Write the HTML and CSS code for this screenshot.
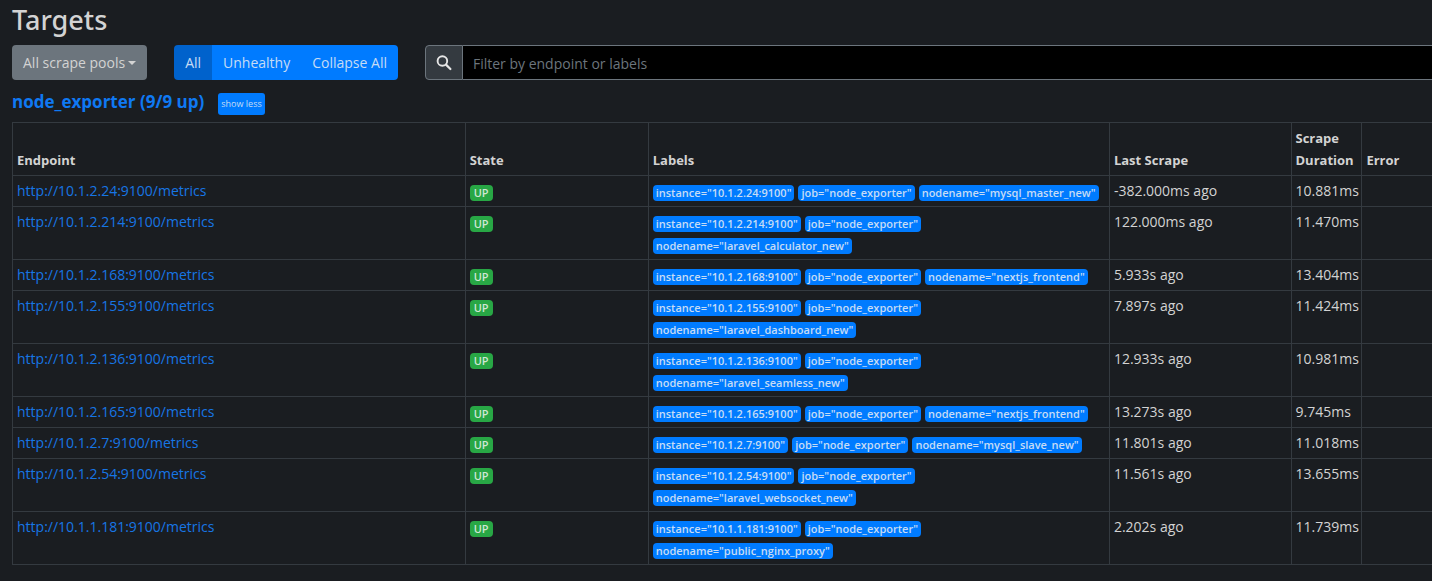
FILE: index.html
```html
<!DOCTYPE html>
<html lang="en">
<head>
<meta charset="utf-8">
<title>Targets</title>
<link rel="stylesheet" href="styles.css">
</head>
<body>
<main class="page">
  <h2 class="title">Targets</h2>
  <div class="toolbar">
    <button type="button" class="btn btn-pools">All scrape pools<span class="caret"></span></button>
    <div class="btn-group" role="group" aria-label="Target filter">
      <button type="button" class="btn active">All</button>
      <button type="button" class="btn">Unhealthy</button>
      <button type="button" class="btn">Collapse All</button>
    </div>
    <div class="search">
      <label class="search-icon" for="filter" aria-label="Filter targets">
        <svg viewBox="0 0 16 16" width="16" height="16" fill="none" stroke="currentColor"><circle cx="6.4" cy="6" r="4.8" stroke-width="1.9"/><path d="M10 9.6l4.4 4.4" stroke-width="2.2" stroke-linecap="round"/></svg>
      </label>
      <input id="filter" class="search-input" type="text" placeholder="Filter by endpoint or labels">
    </div>
  </div>
  <section class="pool">
    <h3 class="pool-head"><a class="pool-link" href="#pool">node_exporter (9/9 up)</a><button type="button" class="btn btn-xs">show less</button></h3>
    <table class="targets" id="pool">
      <colgroup><col class="c-endpoint"><col class="c-state"><col class="c-labels"><col class="c-last"><col class="c-duration"><col class="c-error"></colgroup>
      <thead>
        <tr><th>Endpoint</th><th>State</th><th>Labels</th><th>Last Scrape</th><th>Scrape Duration</th><th>Error</th></tr>
      </thead>
      <tbody>
        <tr><td><a href="http://10.1.2.24:9100/metrics">http://10.1.2.24:9100/metrics</a></td><td><span class="badge up">UP</span></td><td><div class="labels"><span class="badge">instance="10.1.2.24:9100"</span><span class="badge">job="node_exporter"</span><span class="badge">nodename="mysql_master_new"</span></div></td><td>-382.000ms ago</td><td>10.881ms</td><td></td></tr>
        <tr><td><a href="http://10.1.2.214:9100/metrics">http://10.1.2.214:9100/metrics</a></td><td><span class="badge up">UP</span></td><td><div class="labels"><span class="badge">instance="10.1.2.214:9100"</span><span class="badge">job="node_exporter"</span><span class="badge">nodename="laravel_calculator_new"</span></div></td><td>122.000ms ago</td><td>11.470ms</td><td></td></tr>
        <tr><td><a href="http://10.1.2.168:9100/metrics">http://10.1.2.168:9100/metrics</a></td><td><span class="badge up">UP</span></td><td><div class="labels"><span class="badge">instance="10.1.2.168:9100"</span><span class="badge">job="node_exporter"</span><span class="badge">nodename="nextjs_frontend"</span></div></td><td>5.933s ago</td><td>13.404ms</td><td></td></tr>
        <tr><td><a href="http://10.1.2.155:9100/metrics">http://10.1.2.155:9100/metrics</a></td><td><span class="badge up">UP</span></td><td><div class="labels"><span class="badge">instance="10.1.2.155:9100"</span><span class="badge">job="node_exporter"</span><span class="badge">nodename="laravel_dashboard_new"</span></div></td><td>7.897s ago</td><td>11.424ms</td><td></td></tr>
        <tr><td><a href="http://10.1.2.136:9100/metrics">http://10.1.2.136:9100/metrics</a></td><td><span class="badge up">UP</span></td><td><div class="labels"><span class="badge">instance="10.1.2.136:9100"</span><span class="badge">job="node_exporter"</span><span class="badge">nodename="laravel_seamless_new"</span></div></td><td>12.933s ago</td><td>10.981ms</td><td></td></tr>
        <tr><td><a href="http://10.1.2.165:9100/metrics">http://10.1.2.165:9100/metrics</a></td><td><span class="badge up">UP</span></td><td><div class="labels"><span class="badge">instance="10.1.2.165:9100"</span><span class="badge">job="node_exporter"</span><span class="badge">nodename="nextjs_frontend"</span></div></td><td>13.273s ago</td><td>9.745ms</td><td></td></tr>
        <tr><td><a href="http://10.1.2.7:9100/metrics">http://10.1.2.7:9100/metrics</a></td><td><span class="badge up">UP</span></td><td><div class="labels"><span class="badge">instance="10.1.2.7:9100"</span><span class="badge">job="node_exporter"</span><span class="badge">nodename="mysql_slave_new"</span></div></td><td>11.801s ago</td><td>11.018ms</td><td></td></tr>
        <tr><td><a href="http://10.1.2.54:9100/metrics">http://10.1.2.54:9100/metrics</a></td><td><span class="badge up">UP</span></td><td><div class="labels"><span class="badge">instance="10.1.2.54:9100"</span><span class="badge">job="node_exporter"</span><span class="badge">nodename="laravel_websocket_new"</span></div></td><td>11.561s ago</td><td>13.655ms</td><td></td></tr>
        <tr><td><a href="http://10.1.1.181:9100/metrics">http://10.1.1.181:9100/metrics</a></td><td><span class="badge up">UP</span></td><td><div class="labels"><span class="badge">instance="10.1.1.181:9100"</span><span class="badge">job="node_exporter"</span><span class="badge">nodename="public_nginx_proxy"</span></div></td><td>2.202s ago</td><td>11.739ms</td><td></td></tr>
      </tbody>
    </table>
  </section>
</main>
</body>
</html>
```
FILE: styles.css
```css
* { box-sizing: border-box; }

body {
  margin: 0;
  background: #1a1d21;
  color: #d3d3d3;
  font: 14px/22px "Open Sans", "Noto Sans", sans-serif;
}

a { color: #1776e5; text-decoration: none; }

.page { padding: 2px 0 16px 12px; }

.title {
  margin: 0 0 8px;
  font-family: "Noto Sans", sans-serif;
  font-size: 27px;
  line-height: 35px;
  font-weight: 500;
}

.toolbar { display: flex; align-items: stretch; gap: 27px; }

.btn {
  height: 35px;
  padding: 0 11px;
  border: 0;
  border-radius: 4px;
  background: #007bff;
  color: #c6dcf5;
  font: inherit;
  white-space: nowrap;
}

.btn-pools { background: #6c757d; color: #d3d3d3; }

.caret {
  display: inline-block;
  margin-left: 3px;
  vertical-align: 3px;
  border: 4px solid transparent;
  border-top-color: currentColor;
  border-bottom: 0;
}

.btn-group { display: flex; }
.btn-group .btn { border-radius: 0; }
.btn-group .btn:first-child { border-radius: 4px 0 0 4px; }
.btn-group .btn:last-child { border-radius: 0 4px 4px 0; }
.btn-group .active { background: #0062cc; }

.search { display: flex; flex: 1; min-width: 0; }

.search-icon {
  display: flex;
  align-items: center;
  justify-content: center;
  width: 38px;
  border: 1px solid #6c757d;
  border-radius: 4px 0 0 4px;
  background: #343a40;
  color: #e6e6e6;
}

.search-input {
  flex: 1;
  min-width: 0;
  padding: 2px 10px 0;
  border: solid #6c757d;
  border-width: 1px 0;
  border-radius: 0;
  background: #000;
  color: #d3d3d3;
  font: inherit;
}

.search-input::placeholder { color: #6c757d; opacity: 1; }

.pool { padding-top: 12px; }

.pool-head {
  display: flex;
  gap: 14px;
  margin: 0 0 7px;
  font-size: 17px;
  line-height: 20px;
  font-weight: 700;
}

.pool-link { color: #0f79f3; }

.btn-xs {
  height: 22px;
  margin-top: 1px;
  padding: 0 3px;
  border-radius: 3px;
  font-size: 9px;
  font-weight: 400;
}

.targets {
  width: 100%;
  table-layout: fixed;
  border-collapse: separate;
  border-spacing: 0;
  border: solid #343a40;
  border-width: 1px 0 0 1px;
}

.c-endpoint { width: 31.9%; }
.c-state { width: 12.9%; }
.c-labels { width: 32.5%; }
.c-last { width: 12.8%; }
.c-duration { width: 5%; }

.targets th, .targets td {
  padding: 4px;
  border: solid #343a40;
  border-width: 0 1px 1px 0;
  text-align: left;
  vertical-align: top;
}

.targets th { vertical-align: bottom; font-size: 13px; }
.targets th:last-child, .targets td:last-child { border-right: 0; }

.labels { display: flex; flex-wrap: wrap; column-gap: 4px; }

.badge {
  display: block;
  width: fit-content;
  margin: 5px 0 1px;
  padding: 0 3px;
  border-radius: 4px;
  background: #007bff;
  color: #c6dcf5;
  font-size: 11px;
  line-height: 16px;
  font-weight: 600;
}

.up { padding: 0 4px; background: #28a745; color: #cfe6d4; }
```
